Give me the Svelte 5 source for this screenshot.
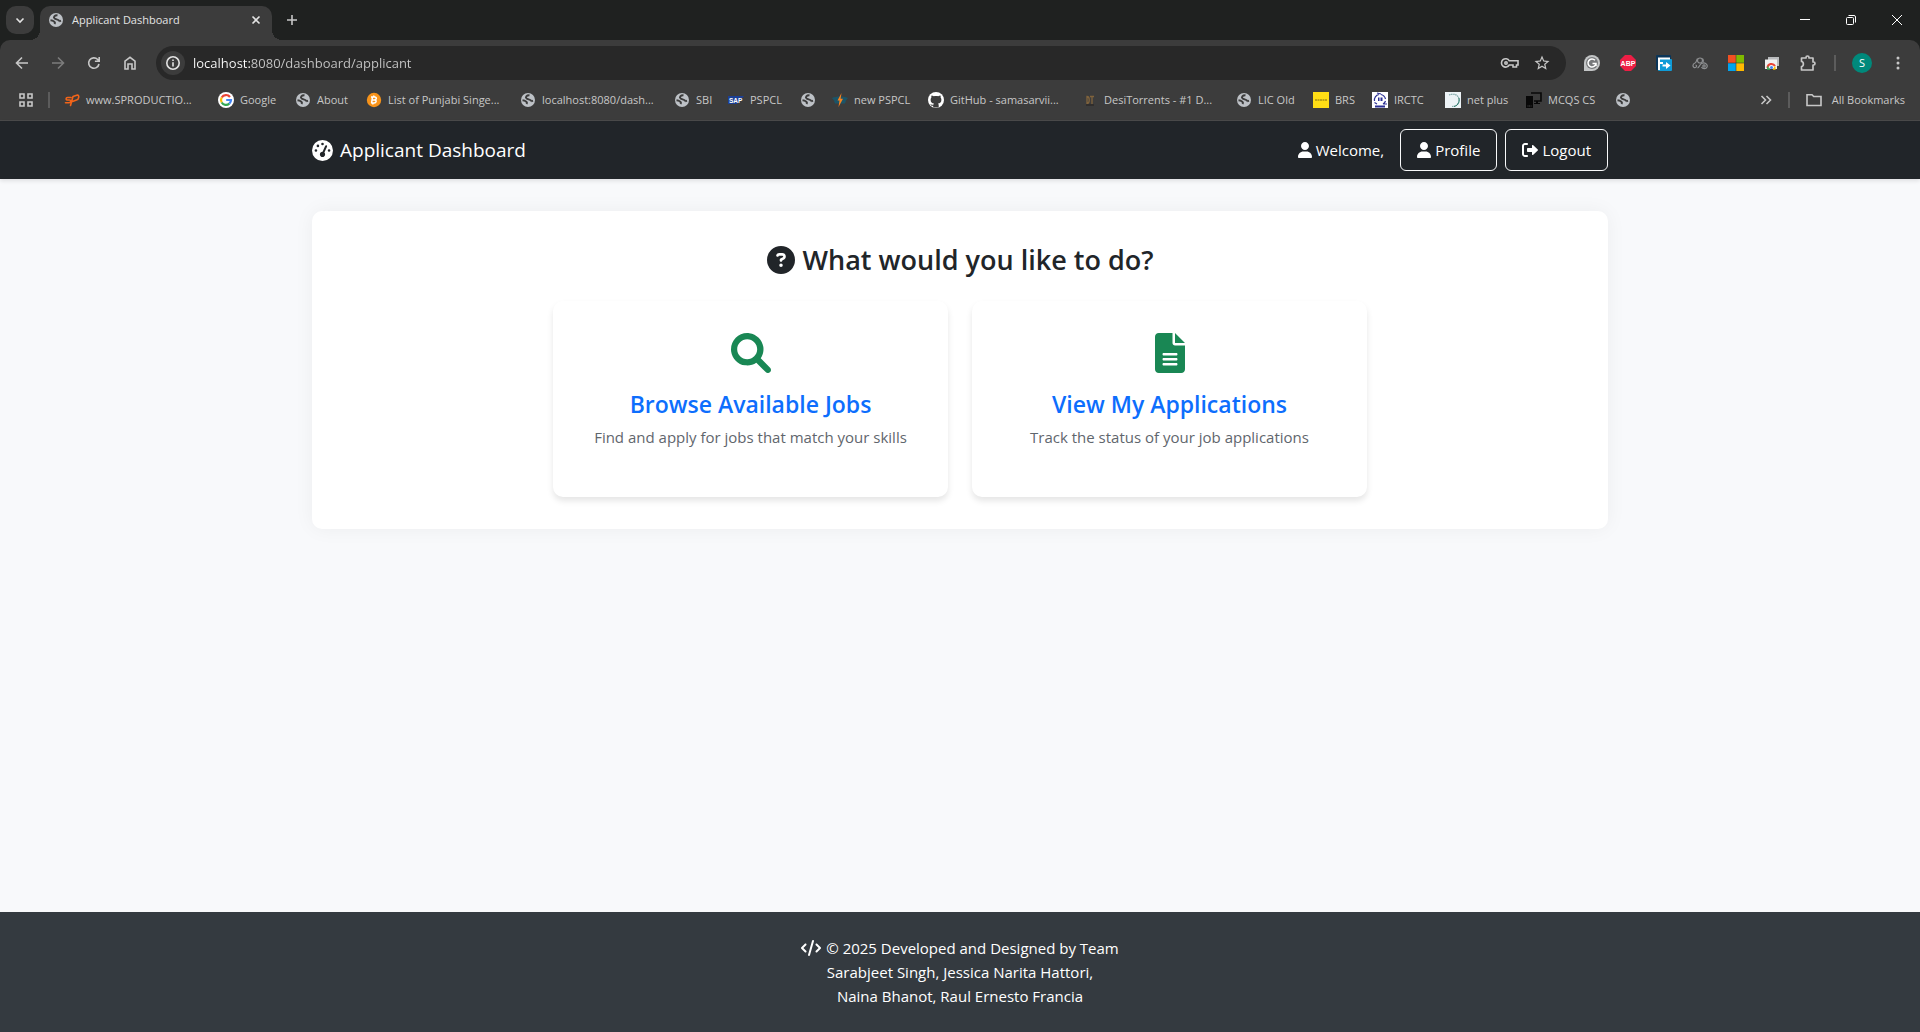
<script>
  const bookmarks = [
    { icon: 'sp', label: 'www.SPRODUCTIO...', width: 138 },
    { icon: 'google', label: 'Google', width: 61 },
    { icon: 'globe', label: 'About', width: 55 },
    { icon: 'bitcoin', label: 'List of Punjabi Singe...', width: 138 },
    { icon: 'globe', label: 'localhost:8080/dash...', width: 138 },
    { icon: 'globe', label: 'SBI', width: 38 },
    { icon: 'sap', label: 'PSPCL', width: 56 },
    { icon: 'globe', label: '', width: 16 },
    { icon: 'bolt', label: 'new PSPCL', width: 80 },
    { icon: 'github', label: 'GitHub - samasarvii...', width: 138 },
    { icon: 'dt', label: 'DesiTorrents - #1 D...', width: 138 },
    { icon: 'globe', label: 'LIC Old', width: 61 },
    { icon: 'brs', label: 'BRS', width: 43 },
    { icon: 'irctc', label: 'IRCTC', width: 57 },
    { icon: 'netplus', label: 'net plus', width: 65 },
    { icon: 'devices', label: 'MCQS CS', width: 73 },
    { icon: 'globe', label: '', width: 16 }
  ];

  const extensions = [
    { icon: 'grammar', name: 'Grammar checker' },
    { icon: 'abp', name: 'Ad blocker' },
    { icon: 'forward', name: 'Page sharing' },
    { icon: 'knot', name: 'Link tool' },
    { icon: 'windows', name: 'Microsoft' },
    { icon: 'remote', name: 'Web store' },
    { icon: 'puzzle', name: 'Extensions' }
  ];

  const actions = [
    { icon: 'search', title: 'Browse Available Jobs', text: 'Find and apply for jobs that match your skills' },
    { icon: 'file', title: 'View My Applications', text: 'Track the status of your job applications' }
  ];

  let address = 'localhost:8080/dashboard/applicant';
</script>

{#snippet solid(name)}
  {#if name === 'user'}
    <svg class="fa" viewBox="0 0 448 512" aria-hidden="true"><path d="M224 256c70.7 0 128-57.31 128-128s-57.3-128-128-128C153.3 0 96 57.31 96 128S153.3 256 224 256zM274.7 304H173.3C77.61 304 0 381.6 0 477.3c0 19.14 15.52 34.67 34.66 34.67h378.7C432.5 512 448 496.5 448 477.3C448 381.6 370.4 304 274.7 304z" /></svg>
  {:else if name === 'search'}
    <svg class="fa" viewBox="0 0 512 512" aria-hidden="true"><path d="M500.3 443.7l-119.7-119.7c27.22-40.41 40.65-90.9 33.46-144.7C401.8 87.79 326.8 13.32 235.2 1.723C99.01-15.51-15.51 99.01 1.724 235.2c11.6 91.64 86.08 166.7 177.6 178.9c53.8 7.189 104.3-6.236 144.7-33.46l119.7 119.7c15.62 15.62 40.95 15.62 56.57 0C515.9 484.7 515.9 459.3 500.3 443.7zM79.1 208c0-70.58 57.42-128 128-128s128 57.42 128 128c0 70.58-57.42 128-128 128S79.1 278.6 79.1 208z" /></svg>
  {:else if name === 'file'}
    <svg class="fa" viewBox="0 0 384 512" aria-hidden="true"><path fill-rule="evenodd" d="M256 0v128h128L256 0zM224 128V0H48C21.5 0 0 21.5 0 48v416c0 26.5 21.5 48 48 48h288c26.5 0 48-21.5 48-48V160H256c-17.7 0-32-14.3-32-32zM112 256h160c8.800 0 16 7.200 16 16s-7.200 16-16 16H112c-8.800 0-16-7.200-16-16s7.200-16 16-16zm0 64h160c8.800 0 16 7.200 16 16s-7.200 16-16 16H112c-8.800 0-16-7.200-16-16s7.200-16 16-16zm0 64h160c8.800 0 16 7.200 16 16s-7.200 16-16 16H112c-8.800 0-16-7.200-16-16s7.200-16 16-16z" /></svg>
  {:else if name === 'question'}
    <svg class="fa" viewBox="0 0 512 512" aria-hidden="true"><path fill-rule="evenodd" d="M256 512A256 256 0 1 0 256 0a256 256 0 1 0 0 512zM169.800 165.300c7.900-22.300 29.100-37.300 52.800-37.300h58.300c34.900 0 63.100 28.300 63.100 63.100c0 22.600-12.100 43.500-31.700 54.800L280 264.400c-.2 13-10.900 23.600-24 23.600c-13.300 0-24-10.700-24-24V250.500c0-8.600 4.600-16.500 12.100-20.800l44.300-25.400c4.700-2.700 7.600-7.700 7.600-13.100c0-8.400-6.800-15.100-15.100-15.100H222.600c-3.400 0-6.400 2.100-7.500 5.300l-.4 1.200c-4.400 12.500-18.200 19-30.600 14.600s-19-18.200-14.600-30.600l.4-1.200zM224 352a32 32 0 1 1 64 0 32 32 0 1 1 -64 0z" /></svg>
  {:else if name === 'logout'}
    <svg class="fa" viewBox="0 0 512 512" aria-hidden="true"><path d="M96 480h64c17.700 0 32-14.300 32-32s-14.300-32-32-32H96c-17.670 0-32-14.330-32-32V128c0-17.670 14.330-32 32-32h64c17.700 0 32-14.300 32-32s-14.300-32-32-32H96C42.980 32 0 74.980 0 128v256C0 437 42.980 480 96 480zM504.800 238.500l-144.100-136c-6.975-6.578-17.200-8.375-26-4.594c-8.803 3.797-14.510 12.470-14.510 22.050l-.0918 72l-128-.001c-17.690 0-32.020 14.330-32.020 32v64c0 17.670 14.340 32 32.020 32l128 .001l.0918 71.100c0 9.578 5.707 18.250 14.510 22.050c8.803 3.781 19.030 1.984 26-4.594l144.100-136C514.400 264.400 514.400 247.600 504.800 238.500z" /></svg>
  {:else if name === 'gauge'}
    <svg class="fa" viewBox="0 0 512 512" aria-hidden="true"><path fill-rule="evenodd" d="M0 256a256 256 0 1 1 512 0A256 256 0 1 1 0 256zM288 96a32 32 0 1 0 -64 0 32 32 0 1 0 64 0zM256 416c35.300 0 64-28.700 64-64c0-17.400-6.900-33.100-18.100-44.600L366 161.700c5.300-12.100-.2-26.300-12.300-31.600s-26.300 .2-31.600 12.300L257.900 288c-.6 0-1.300 0-1.900 0c-35.300 0-64 28.700-64 64s28.700 64 64 64zM176 144a32 32 0 1 0 -64 0 32 32 0 1 0 64 0zM96 288a32 32 0 1 0 0-64 32 32 0 1 0 0 64zm352-32a32 32 0 1 0 -64 0 32 32 0 1 0 64 0z" /></svg>
  {:else if name === 'code'}
    <svg class="fa" viewBox="0 0 640 512" aria-hidden="true"><path d="M392.800 1.200c-17-4.900-34.700 5-39.600 22l-128 448c-4.900 17 5 34.700 22 39.600s34.700-5 39.600-22l128-448c4.900-17-5-34.700-22-39.600zm80.600 120.100c-12.500 12.500-12.500 32.800 0 45.300L562.700 256l-89.400 89.400c-12.500 12.500-12.500 32.800 0 45.300s32.800 12.500 45.300 0l112-112c12.500-12.500 12.500-32.800 0-45.300l-112-112c-12.500-12.500-32.800-12.500-45.300 0zm-306.700 0c-12.500-12.500-32.800-12.500-45.300 0l-112 112c-12.500 12.500-12.500 32.800 0 45.300l112 112c12.500 12.500 32.800 12.500 45.300 0s12.500-32.800 0-45.300L77.300 256l89.400-89.400c12.500-12.500 12.500-32.800 0-45.300z" /></svg>
  {/if}
{/snippet}

{#snippet mark(name)}
  <svg class="mark" viewBox="0 0 16 16" aria-hidden="true">
    {#if name === 'globe'}
      <circle cx="8" cy="8" r="7" fill="#bdc1c6" />
      <path d="M9.500 3.200 C6.500 3 5 5.200 6.600 6.500 C8 7.600 11 7.200 11.300 9.300 M11.300 9.300 L13 8.600 M2.500 8.300 C5 8.600 8 9.800 6.500 12" fill="none" stroke="#3c3c3c" stroke-width="1.900" />
    {:else if name === 'sp'}
      <path d="M7 5.500 H3.500 C1.800 5.500 1.500 8 3.500 8 H5.500 C7.500 8 7 10.800 5 10.800 H1.500 M6.500 13.500 L9 4.500 L13.500 3 C15.500 3 15 7.600 12.500 8 L8.500 9.500" fill="none" stroke="#f26419" stroke-width="1.600" stroke-linecap="round" stroke-linejoin="round" />
    {:else if name === 'google'}
      <circle cx="8" cy="8" r="8" fill="#fff" />
      <path d="M12 5 A5 5 0 0 0 3.700 5.500" fill="none" stroke="#ea4335" stroke-width="2.200" />
      <path d="M3.700 5.500 A5 5 0 0 0 3.700 10.500" fill="none" stroke="#fbbc05" stroke-width="2.200" />
      <path d="M3.700 10.500 A5 5 0 0 0 11.300 11.700" fill="none" stroke="#34a853" stroke-width="2.200" />
      <path d="M11.300 11.700 A5 5 0 0 0 13 8 H8.200" fill="none" stroke="#4285f4" stroke-width="2.200" />
    {:else if name === 'bitcoin'}
      <circle cx="8" cy="8" r="7.200" fill="#f7931a" />
      <path d="M6.500 4.500 L5.600 11.200 M5 5 H8.800 C11 5 10.800 7.800 8.600 7.900 H6.300 M8.600 7.900 C11 8.200 10.300 11 8.200 11 H5 M8 3.500 L7.700 5 M7 11 L6.800 12.500" fill="none" stroke="#fff" stroke-width="1.500" />
    {:else if name === 'sap'}
      <path d="M0 4 H16 L9 12 H0 Z" fill="#1c3f94" />
      <text x="1" y="11" font-family="Liberation Sans, sans-serif" font-size="6.500" font-weight="700" fill="#fff">SAP</text>
    {:else if name === 'bolt'}
      <path d="M0 6 C5 4 11 4 16 6 L14 8.500 L13 11.500 H3 L2 8.500 Z" fill="#1b5468" />
      <path d="M9.500 1 L5.500 8.500 H7.500 L6.500 15 L11 6.800 H8.600 Z" fill="#f58220" />
    {:else if name === 'github'}
      <circle cx="8" cy="8" r="8" fill="#fff" />
      <path fill="#3c3c3c" d="M5.200 15.500 V13.700 C3.200 14.100 2.700 12.800 2.300 12.200 C3.400 12.200 3.600 13.200 5.400 12.700 C5.500 12.200 5.700 11.900 6 11.600 C4 11.300 2.600 10.400 2.600 7.700 C2.600 6.800 2.900 6.100 3.400 5.500 C3.200 4.700 3.300 4 3.500 3.400 C4.400 3.400 5.100 3.800 5.800 4.200 C7.200 3.900 8.800 3.900 10.200 4.200 C10.900 3.800 11.600 3.400 12.500 3.400 C12.700 4 12.800 4.700 12.600 5.500 C13.100 6.100 13.400 6.800 13.400 7.700 C13.400 10.400 12 11.300 10 11.600 C10.500 12 10.700 12.600 10.700 13.300 V15.500 Z" />
    {:else if name === 'dt'}
      <path d="M5 4.500 V11.500 C8 11.500 8 4.500 5 4.500 Z M8 4.500 H12 M10 4.500 V12" fill="none" stroke="#80633c" stroke-width="1.300" />
      <path d="M4 13 H12" stroke="#2c2a28" stroke-width="1.500" />
    {:else if name === 'brs'}
      <rect width="16" height="16" fill="#ffdd15" />
      <path d="M2 8 H14" stroke="#7c6a10" stroke-width="1" stroke-dasharray="2 0.500" />
    {:else if name === 'irctc'}
      <rect width="16" height="16" fill="#fff" />
      <path d="M2.500 9 A5.500 5.500 0 0 1 7 2.500 M5 1 L9 2 M9 2.500 A6 6 0 0 1 13.500 7 M13.500 9 A5.500 5.500 0 0 1 11 12 M2.500 10.500 L5 12 M11.500 12 H15" fill="none" stroke="#2b2f93" stroke-width="1.200" />
      <path d="M6 5.500 H7.500 V9 H6 Z M8.500 5.500 H10.500 V9 H8.500 Z M3 13.500 H13 V15.500 H3 Z" fill="#2b2f93" />
    {:else if name === 'netplus'}
      <rect width="16" height="16" fill="#edf3f6" />
      <path d="M4 3 C9 1 14 3 14 8 C14 12 11 14.500 7 14.500" fill="none" stroke="#7ba4a4" stroke-width="1.200" stroke-dasharray="1.500 0.600" />
      <path d="M14 6 C15 11 12 14 9 14.500" fill="none" stroke="#2e7d6d" stroke-width="1" />
    {:else if name === 'devices'}
      <path d="M5 1 H15 V9 H8" fill="none" stroke="#080808" stroke-width="1.600" />
      <path d="M0 4 H7 V16 H0 Z M10 9 H12 V11 H14 V12 H8 V11 H10 Z" fill="#080808" />
      <path d="M1.500 14 H5.500" stroke="#4a4a4a" stroke-width="1" stroke-dasharray="1 0.600" />
    {:else if name === 'grammar'}
      <path d="M0 16 V8 A8 8 0 1 1 8 16 Z" fill="#c3c5c6" />
      <circle cx="8" cy="8" r="6" fill="#77797b" />
      <path d="M11 5.300 A4 4 0 1 0 12 8.500 H8.500 M12 8.500 V11" fill="none" stroke="#fff" stroke-width="1.500" />
    {:else if name === 'abp'}
      <path d="M5 0 H11 L16 5 V11 L11 16 H5 L0 11 V5 Z" fill="#ed1e45" />
      <text x="8" y="10.500" text-anchor="middle" font-family="Liberation Sans, sans-serif" font-size="7" font-weight="700" fill="#fff">ABP</text>
    {:else if name === 'forward'}
      <rect width="15" height="15" rx="1" fill="#0b3558" />
      <rect x="2" y="4" width="14" height="12" rx="1" fill="#0f9bd7" />
      <path d="M3 15 V3.500 H14 M3 8 H7 M6.500 10.500 H12" fill="none" stroke="#fff" stroke-width="2" />
      <path d="M10 7 L14.500 10.500 L10 14 Z" fill="#fff" />
    {:else if name === 'knot'}
      <g fill="none" stroke="#8d8f91" stroke-width="1.200"><circle cx="8" cy="5.500" r="2.500" /><circle cx="12" cy="11" r="1.200" /><path d="M5.500 3.500 C4 6 4.500 7.500 3 8 C0 9 0.500 13 3.500 12.500 C5 12 5 10 3.500 10 M5.500 13 C7.500 12.500 7.500 9.500 9.500 8.500 C13 6.800 16 9.500 15 12 C14 14.500 10.500 14 9.500 12 M10.500 3.500 C11.500 5 11.500 6 11 7" /></g>
    {:else if name === 'windows'}
      <path d="M0 0h7.700v7.700H0z" fill="#f25022" /><path d="M8.300 0H16v7.700H8.300z" fill="#7fba00" /><path d="M0 8.300h7.700V16H0z" fill="#00a4ef" /><path d="M8.300 8.300H16V16H8.300z" fill="#ffb900" />
    {:else if name === 'remote'}
      <path d="M4 2 H15 V11 H4 Z" fill="#b9bbbd" /><path d="M1 4.500 H13 V14 H1 Z" fill="#f1f1f1" />
      <path d="M3.500 13 A4 4 0 0 1 11 11" fill="none" stroke="#ea4335" stroke-width="2" />
      <path d="M3.800 11.500 V14 H6" fill="none" stroke="#34a853" stroke-width="1.500" />
      <path d="M9 14 H10.800 V11.500" fill="none" stroke="#fbbc05" stroke-width="1.500" />
      <circle cx="7.500" cy="12.500" r="1.500" fill="#4285f4" />
    {:else if name === 'puzzle'}
      <path d="M1.500 3 H6 V2.500 A1.500 1.500 0 0 1 9 2.500 V3 H13 V7 H13.500 A1.500 1.500 0 0 1 13.500 10 H13 V15 H1.500 V11.500 C4 11.500 4 6.500 1.500 6.500 Z" fill="none" stroke="#c7c7c7" stroke-width="1.700" stroke-linejoin="round" />
    {/if}
  </svg>
{/snippet}

<div class="window">
  <header class="chrome">
    <div class="tabs">
      <button class="tab-search" aria-label="Search tabs">
        <svg viewBox="0 0 16 16" aria-hidden="true"><path d="M4.500 6.500 L8 10 L11.500 6.500" /></svg>
      </button>
      <div class="tab">
        {@render mark('globe')}
        <span class="tab-title">Applicant Dashboard</span>
        <button class="tab-close" aria-label="Close tab">
          <svg viewBox="0 0 16 16" aria-hidden="true"><path d="M4.500 4.500 L11.500 11.500 M11.500 4.500 L4.500 11.500" /></svg>
        </button>
      </div>
      <button class="new-tab" aria-label="New tab">
        <svg viewBox="0 0 16 16" aria-hidden="true"><path d="M8 3 V13 M3 8 H13" /></svg>
      </button>
      <div class="controls">
        <button aria-label="Minimize"><svg viewBox="0 0 16 16" aria-hidden="true"><path d="M3 7.500 H13" /></svg></button>
        <button aria-label="Restore"><svg viewBox="0 0 16 16" aria-hidden="true"><rect x="3.500" y="5.500" width="7" height="7" rx="1" /><path d="M5.500 3.500 H11 A1.500 1.500 0 0 1 12.500 5 V10.500" /></svg></button>
        <button aria-label="Close"><svg viewBox="0 0 16 16" aria-hidden="true"><path d="M3 3 L13 13 M13 3 L3 13" /></svg></button>
      </div>
    </div>

    <div class="toolbar">
      <button class="tool" aria-label="Back"><svg viewBox="0 0 16 16" aria-hidden="true"><path d="M14 8 H3 M8 2.500 L2.500 8 L8 13.500" /></svg></button>
      <button class="tool dim" aria-label="Forward"><svg viewBox="0 0 16 16" aria-hidden="true"><path d="M2 8 H13 M8 2.500 L13.500 8 L8 13.500" /></svg></button>
      <button class="tool" aria-label="Reload"><svg viewBox="0 0 16 16" aria-hidden="true"><path d="M13 9 A5.200 5.200 0 1 1 11.700 4.500 L13 6 M13.200 2 V6.300 H8.900" /></svg></button>
      <button class="tool" aria-label="Home"><svg viewBox="0 0 16 16" aria-hidden="true"><path d="M3 14 V6.200 L8 2.300 L13 6.200 V14 H10 V9 H6 V14 Z" /></svg></button>
      <div class="omnibox">
        <button class="site" aria-label="Site information">
          <svg viewBox="0 0 16 16" aria-hidden="true"><circle cx="8" cy="8" r="6.200" /><path d="M8 7.300 V11.500 M8 4.500 V6" /></svg>
        </button>
        <input class="address" type="text" aria-label="Address" bind:value={address} />
        <button class="inner" aria-label="Passwords">
          <svg class="key" viewBox="0 0 20 16" aria-hidden="true"><path d="M9.300 5.800 H18 V10 H16.500 V12 H13 V10 H9.300 A4.200 4.200 0 1 1 9.300 5.800 Z" /><circle cx="6" cy="8" r="1.200" /></svg>
        </button>
        <button class="inner" aria-label="Bookmark this tab">
          <svg class="star" viewBox="0 0 24 24" aria-hidden="true"><path d="M22 9.240l-7.190-.62L12 2 9.190 8.630 2 9.240l5.460 4.730L5.820 21 12 17.270 18.180 21l-1.630-7.030L22 9.240zM12 15.400l-3.760 2.270 1-4.280-3.320-2.880 4.380-.38L12 6.100l1.710 4.040 4.380.38-3.320 2.880 1 4.280L12 15.400z" /></svg>
        </button>
      </div>
      {#each extensions as extension}
        <button class="tool" aria-label={extension.name}>{@render mark(extension.icon)}</button>
      {/each}
      <span class="divider"></span>
      <button class="tool" aria-label="Account"><span class="avatar">S</span></button>
      <button class="tool" aria-label="Menu"><svg class="dots" viewBox="0 0 16 16" aria-hidden="true"><circle cx="8" cy="3" r="1.500" /><circle cx="8" cy="8" r="1.500" /><circle cx="8" cy="13" r="1.500" /></svg></button>
    </div>

    <nav class="bookmarks" aria-label="Bookmarks">
      <button class="apps" aria-label="Apps">
        <svg viewBox="0 0 16 16" aria-hidden="true"><path d="M2 2 H6 V6 H2 Z M10 2 H14 V6 H10 Z M2 10 H6 V14 H2 Z M10 10 H14 V14 H10 Z" /></svg>
      </button>
      <span class="divider"></span>
      <div class="links">
        {#each bookmarks as bookmark}
          <a href="#bookmark" aria-label={bookmark.label || 'Bookmark'} style:width={`${bookmark.width}px`}>
            {@render mark(bookmark.icon)}{#if bookmark.label}<span>{bookmark.label}</span>{/if}
          </a>
        {/each}
      </div>
      <button class="more" aria-label="More bookmarks">
        <svg viewBox="0 0 16 16" aria-hidden="true"><path d="M3.500 4 L7.500 8 L3.500 12 M8.500 4 L12.500 8 L8.500 12" /></svg>
      </button>
      <span class="divider"></span>
      <button class="all">
        <svg viewBox="0 0 16 16" aria-hidden="true"><path d="M1 13.500 V2.700 H6 L7.700 4.500 H15 V13.500 Z" /></svg>
        All Bookmarks
      </button>
    </nav>
  </header>

  <nav class="navbar" aria-label="Main">
    <div class="container">
      <a class="brand" href="#dashboard">{@render solid('gauge')}Applicant Dashboard</a>
      <span class="welcome">{@render solid('user')}Welcome,</span>
      <a class="nav-button" href="#profile">{@render solid('user')}Profile</a>
      <a class="nav-button" href="#logout">{@render solid('logout')}Logout</a>
    </div>
  </nav>

  <main>
    <div class="container">
      <section class="panel">
        <h2>{@render solid('question')}What would you like to do?</h2>
        <div class="cards">
          {#each actions as action}
            <article class="card">
              {@render solid(action.icon)}
              <h3><a href="#{action.icon}">{action.title}</a></h3>
              <p>{action.text}</p>
            </article>
          {/each}
        </div>
      </section>
    </div>
  </main>

  <footer>
    <p>{@render solid('code')}© 2025 Developed and Designed by Team<br />Sarabjeet Singh, Jessica Narita Hattori,<br />Naina Bhanot, Raul Ernesto Francia</p>
  </footer>
</div>

<style>
  :global(body) {
    margin: 0;
    background: #f8f9fa;
  }

  .window {
    display: flex;
    flex-direction: column;
    min-height: 100vh;
    font-family: 'Segoe UI', 'Open Sans', 'Noto Sans', sans-serif;
    font-size: 15px;
    line-height: 24px;
    color: #212529;
    background: #f8f9fb;
  }

  button {
    display: flex;
    align-items: center;
    justify-content: center;
    flex: none;
    margin: 0;
    padding: 0;
    border: 0;
    background: none;
    color: inherit;
    font: inherit;
  }

  a {
    color: inherit;
    text-decoration: none;
  }

  svg {
    flex: none;
  }

  /* Browser frame */
  .chrome {
    background: #1f2120;
    color: #c7c7c7;
    font-size: 11px;
    line-height: 16px;
  }

  .chrome svg {
    width: 16px;
    height: 16px;
  }

  .chrome button > svg:not(.mark) {
    fill: none;
    stroke: currentColor;
    stroke-width: 1.6;
  }

  .tabs {
    display: flex;
    align-items: center;
    height: 40px;
    padding-left: 6px;
  }

  .tab-search {
    width: 28px;
    height: 28px;
    border-radius: 10px;
    background: #3c3c3c;
    color: #e3e3e3;
  }

  .tab {
    position: relative;
    display: flex;
    align-items: center;
    align-self: flex-end;
    gap: 8px;
    box-sizing: border-box;
    width: 232px;
    height: 34px;
    margin-left: 6px;
    padding: 0 8px 6px;
    border-radius: 10px 10px 0 0;
    background: #3c3c3c;
    color: #e3e3e3;
  }

  .tab::before,
  .tab::after {
    content: '';
    position: absolute;
    bottom: 0;
    width: 10px;
    height: 10px;
  }

  .tab::before {
    right: 100%;
    background: radial-gradient(circle at 0 0, transparent 10px, #3c3c3c 10px);
  }

  .tab::after {
    left: 100%;
    background: radial-gradient(circle at 100% 0, transparent 10px, #3c3c3c 10px);
  }

  .tab-title {
    flex: 1;
    white-space: nowrap;
  }

  .new-tab {
    width: 28px;
    height: 28px;
    margin-left: 6px;
  }

  .controls {
    display: flex;
    margin-left: auto;
    color: #fff;
  }

  .controls button {
    width: 46px;
    height: 40px;
  }

  .controls button > svg:not(.mark) {
    stroke-width: 1;
  }

  .toolbar {
    display: flex;
    align-items: center;
    padding: 6px 4px;
    border-radius: 10px 10px 0 0;
    background: #3c3c3c;
  }

  .tool {
    width: 36px;
    height: 34px;
  }

  .dim {
    color: #7c7c7c;
  }

  .omnibox {
    display: flex;
    align-items: center;
    flex: 1;
    height: 34px;
    box-sizing: border-box;
    margin: 0 8px;
    padding: 0 8px 0 5px;
    border-radius: 17px;
    background: #282828;
  }

  .site {
    width: 24px;
    height: 24px;
    border-radius: 50%;
    background: #3c3c3c;
    color: #e3e3e3;
  }

  .address {
    flex: 1;
    min-width: 0;
    height: 24px;
    margin: 0 8px;
    padding: 0;
    border: 0;
    outline: 0;
    font: inherit;
    font-size: 13px;
    color: transparent;
    background: linear-gradient(90deg, #fff 58px, #c7c7c7 58px);
    background-clip: text;
    -webkit-background-clip: text;
  }

  .inner {
    width: 32px;
    height: 32px;
  }

  .chrome .key {
    width: 20px;
  }

  .chrome button > .star:not(.mark) {
    width: 18px;
    height: 18px;
    fill: currentColor;
    stroke: none;
  }

  .chrome button > .dots:not(.mark) {
    fill: currentColor;
    stroke: none;
  }

  .avatar {
    width: 20px;
    height: 20px;
    border-radius: 50%;
    background: #00897b;
    color: #fff;
    line-height: 20px;
  }

  .divider {
    flex: none;
    width: 2px;
    height: 16px;
    margin: 0 8px;
    background: #5c5c5c;
  }

  .bookmarks {
    display: flex;
    align-items: center;
    height: 28px;
    padding: 0 15px 6px 12px;
    border-bottom: 1px solid #4a4a4a;
    background: #3c3c3c;
  }

  .apps {
    width: 28px;
    height: 28px;
  }

  .links {
    display: flex;
    flex: 1;
    gap: 16px;
    margin-left: 6px;
    overflow: hidden;
  }

  .links a {
    display: flex;
    align-items: center;
    flex: none;
    gap: 6px;
    white-space: nowrap;
  }

  .more {
    width: 28px;
    height: 28px;
  }

  .all {
    gap: 10px;
    margin-left: 8px;
    white-space: nowrap;
  }

  /* Page */
  .fa {
    height: 1em;
    fill: currentColor;
  }

  .container {
    box-sizing: border-box;
    width: 100%;
    max-width: 1320px;
    margin: 0 auto;
    padding: 0 12px;
  }

  .navbar {
    position: relative;
    background: #212529;
    color: #fff;
    box-shadow: 0 2px 4px rgba(0, 0, 0, 0.1);
  }

  .navbar .container {
    display: flex;
    align-items: center;
    gap: 8px;
    padding-top: 8px;
    padding-bottom: 8px;
  }

  .brand {
    display: flex;
    align-items: center;
    gap: 7px;
    margin-right: auto;
    font-size: 19px;
  }

  .brand .fa {
    height: 21px;
  }

  .welcome,
  .nav-button {
    display: flex;
    align-items: center;
    gap: 4px;
  }

  .welcome {
    margin-right: 8px;
  }

  .welcome .fa,
  .nav-button .fa,
  footer .fa {
    height: 16px;
  }

  .nav-button {
    padding: 8px 16px;
    border: 1px solid #f8f9fa;
    border-radius: 6px;
  }

  .panel {
    margin: 32px 0;
    padding: 32px;
    border-radius: 10px;
    background: #fff;
    box-shadow: 0 0 20px rgba(0, 0, 0, 0.05);
  }

  h2 {
    display: flex;
    align-items: center;
    justify-content: center;
    gap: 8px;
    margin: 0 0 24px;
    font-size: 27px;
    font-weight: 600;
    line-height: 34px;
  }

  h2 .fa {
    height: 28px;
  }

  .cards {
    display: grid;
    grid-template-columns: repeat(2, minmax(0, 395px));
    gap: 24px;
    justify-content: center;
  }

  .card {
    display: flex;
    flex-direction: column;
    align-items: center;
    padding: 32px 24px 48px;
    border-radius: 10px;
    background: #fff;
    box-shadow: 0 4px 6px rgba(0, 0, 0, 0.1);
    text-align: center;
  }

  .card .fa {
    height: 40px;
    color: #198754;
  }

  h3 {
    margin: 16px 0 6px;
    color: #0d6efd;
    font-size: 23px;
    font-weight: 600;
    line-height: 30px;
  }

  .card p {
    margin: 0;
    color: #5f666d;
  }

  footer {
    margin-top: auto;
    padding: 24px;
    background: #343a40;
    color: #fff;
    text-align: center;
  }

  footer p {
    margin: 0;
  }

  footer .fa {
    margin-right: 5px;
    vertical-align: -2px;
  }
</style>
